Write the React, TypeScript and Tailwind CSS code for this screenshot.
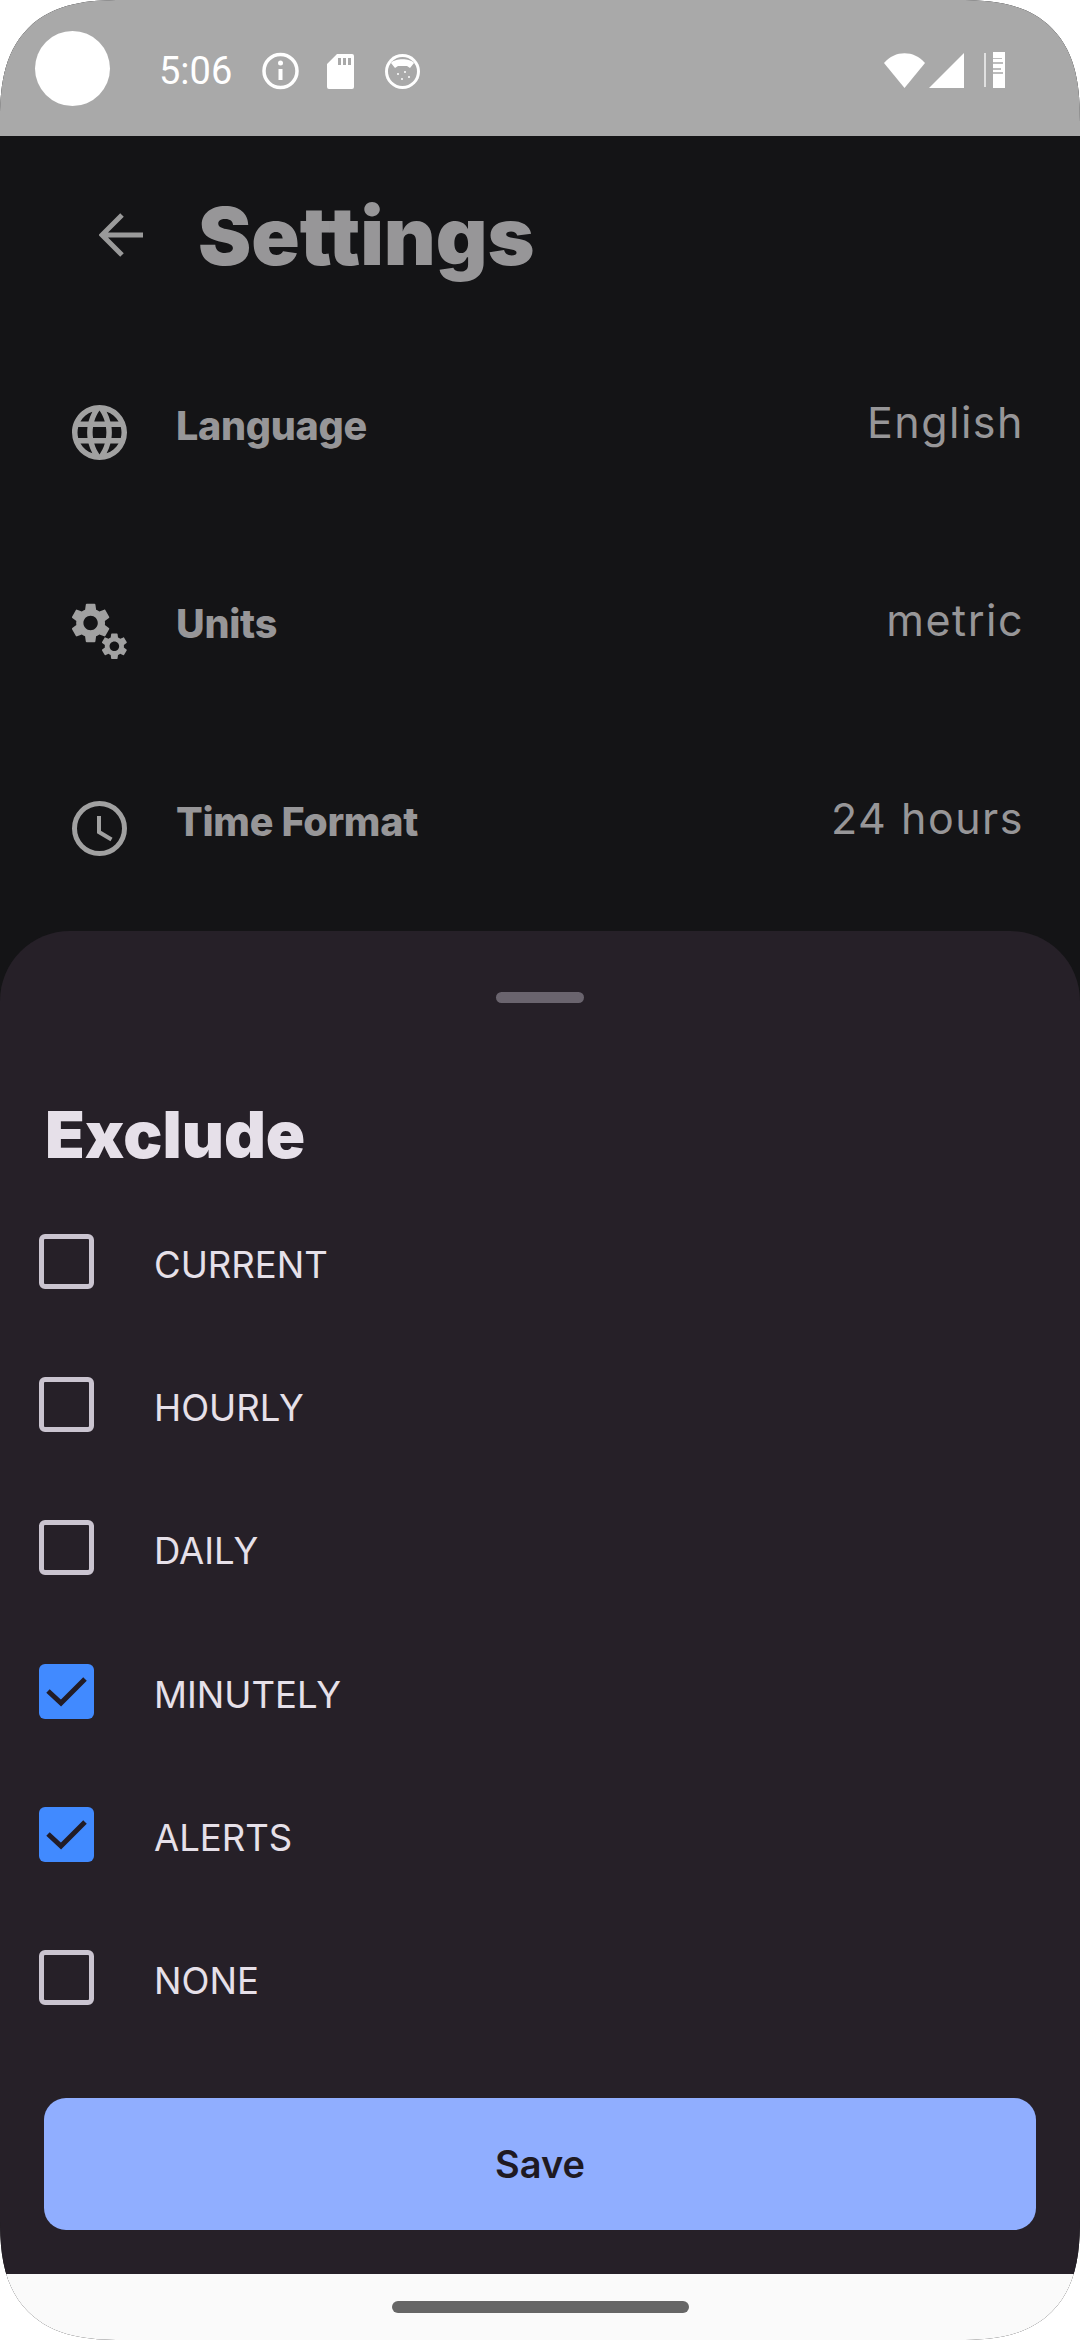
const gear = "M19.14 12.94c.04-.3.06-.61.06-.94 0-.32-.02-.64-.07-.94l2.03-1.58c.18-.14.23-.41.12-.61l-1.92-3.32c-.12-.22-.37-.29-.59-.22l-2.39.96c-.5-.38-1.03-.7-1.62-.94l-.36-2.54c-.04-.24-.24-.41-.48-.41h-3.84c-.24 0-.43.17-.47.41l-.36 2.54c-.59.24-1.13.57-1.62.94l-2.39-.96c-.22-.08-.47 0-.59.22L2.74 8.87c-.12.21-.08.47.12.61l2.03 1.58c-.05.3-.09.63-.09.94s.02.64.07.94l-2.03 1.58c-.18.14-.23.41-.12.61l1.92 3.32c.12.22.37.29.59.22l2.39-.96c.5.38 1.03.7 1.62.94l.36 2.54c.05.24.24.41.48.41h3.84c.24 0 .44-.17.47-.41l.36-2.54c.59-.24 1.13-.56 1.62-.94l2.39.96c.22.08.47 0 .59-.22l1.92-3.32c.12-.22.07-.47-.12-.61l-2.01-1.58zM12 15.6c-1.98 0-3.6-1.62-3.6-3.6s1.62-3.6 3.6-3.6 3.6 1.62 3.6 3.6-1.62 3.6-3.6 3.6z";
const web = "M16.36,14C16.44,13.34 16.5,12.68 16.5,12C16.5,11.32 16.44,10.66 16.36,10H19.74C19.9,10.64 20,11.31 20,12C20,12.69 19.9,13.36 19.74,14M14.59,19.56C15.19,18.45 15.65,17.25 15.97,16H18.92C17.96,17.65 16.43,18.93 14.59,19.56M14.34,14H9.66C9.56,13.34 9.5,12.68 9.5,12C9.5,11.32 9.56,10.65 9.66,10H14.34C14.43,10.65 14.5,11.32 14.5,12C14.5,12.68 14.43,13.34 14.34,14M12,19.96C11.17,18.76 10.5,17.43 10.09,16H13.91C13.5,17.43 12.83,18.76 12,19.96M8,8H5.08C6.03,6.34 7.57,5.06 9.4,4.44C8.8,5.55 8.35,6.75 8,8M5.08,16H8C8.35,17.25 8.8,18.45 9.4,19.56C7.57,18.93 6.03,17.65 5.08,16M4.26,14C4.1,13.36 4,12.69 4,12C4,11.31 4.1,10.64 4.26,10H7.64C7.56,10.66 7.5,11.32 7.5,12C7.5,12.68 7.56,13.34 7.64,14M12,4.03C12.83,5.23 13.5,6.57 13.91,8H10.09C10.5,6.57 11.17,5.23 12,4.03M18.92,8H15.97C15.65,6.75 15.19,5.55 14.59,4.44C16.43,5.07 17.96,6.34 18.92,8M12,2C6.47,2 2,6.5 2,12A10,10 0 0,0 12,22A10,10 0 0,0 22,12A10,10 0 0,0 12,2Z";

function GlobeIcon() {
  return <svg viewBox="2 2 20 20" className="w-[55px] h-[55px]" fill="#a1a1a1"><path d={web} /></svg>;
}
function CogsIcon() {
  return (
    <svg viewBox="0 0 55 56" className="w-[55px] h-[56px]" fill="#a1a1a1">
      <g transform="translate(-5.4,-4) scale(2)"><path d={gear} /></g>
      <g transform="translate(26.4,27.3) scale(1.33)"><path d={gear} /></g>
    </svg>
  );
}
function ClockIcon() {
  return (
    <svg viewBox="0 0 55 55" className="w-[55px] h-[55px]" fill="none" stroke="#a1a1a1">
      <circle cx="27.5" cy="27.5" r="25" strokeWidth="5" />
      <path d="M27 15V31L39.5 38.5" strokeWidth="4" />
    </svg>
  );
}

function SettingRow({ icon, label, value }: { icon: React.ReactNode; label: string; value: string }) {
  return (
    <div className="flex h-[198px] items-start pl-[72px] pr-[56px]">
      <div className="w-[104px] shrink-0 pt-[6px]">{icon}</div>
      <div className="font-['Inter'] font-extrabold text-[39.5px] leading-[54px] text-[#979698] tracking-[-0.3px]">{label}</div>
      <div className="ml-auto font-['Inter'] text-[43px] leading-[46px] text-[#979698] tracking-[1.5px]">{value}</div>
    </div>
  );
}

function CheckRow({ label, checked }: { label: string; checked?: boolean }) {
  return (
    <div className="flex h-[143.2px] items-start pl-[39px]">
      {checked ? (
        <div className="w-[55px] h-[55px] rounded-[6px] bg-[#418aff] flex items-center justify-center">
          <svg viewBox="0 0 55 55" className="w-[55px] h-[55px]" fill="none" stroke="#221c26" strokeWidth="5"><path d="M9 27L22 39L46 15" /></svg>
        </div>
      ) : (
        <div className="w-[55px] h-[55px] rounded-[6px] border-[5px] border-[#cac4d0]" />
      )}
      <div className="ml-[60px] mt-[8px] font-['Inter'] font-normal text-[36.5px] leading-[47px] text-[#e6e0e9] whitespace-nowrap">{label}</div>
    </div>
  );
}

export default function App() {
  return (
    <div className="w-[1080px] h-[2340px] bg-white">
      <div className="w-[1080px] h-[2340px] flex flex-col overflow-hidden bg-[#141416] rounded-[122px] [corner-shape:superellipse(1.4)]">
        <div className="h-[136px] shrink-0 bg-[#a9a9a9] flex items-center pl-[35px] pr-[75px]">
          <div className="w-[75px] h-[75px] rounded-full bg-white" />
          <div className="ml-[49px] mt-[5px] font-['Roboto'] font-normal text-[38px] leading-[44px] text-white">5:06</div>
          <svg viewBox="0 0 37 38" className="ml-[30px] w-[37px] h-[38px] mt-[6px]" fill="none" stroke="white">
            <circle cx="18.5" cy="19" r="16.5" strokeWidth="3.5" />
            <path d="M18.5 17V28" strokeWidth="4" />
            <circle cx="18.5" cy="11" r="2.5" fill="white" stroke="none" />
          </svg>
          <svg viewBox="0 0 27 35" className="ml-[28px] w-[27px] h-[35px] mt-[6px]" fill="white">
            <path fillRule="evenodd" d="M10 0H25A2 2 0 0 1 27 2V33A2 2 0 0 1 25 35H2A2 2 0 0 1 0 33V10ZM11 4V11H14V4ZM16 4V11H19V4ZM21 4V11H24V4Z" />
          </svg>
          <svg viewBox="0 0 35 35" className="ml-[31px] w-[35px] h-[35px] mt-[6px]">
            <circle cx="17.5" cy="17.5" r="17.5" fill="white" />
            <circle cx="17.5" cy="17.5" r="14.5" fill="#a9a9a9" />
            <path d="M6 9C10 4 25 4 29 9L25 14L22 12H13L10 14Z" fill="white" />
            <circle cx="13" cy="20" r="1" fill="white" /><circle cx="20" cy="18" r="1" fill="white" /><circle cx="17" cy="25" r="1" fill="white" /><circle cx="24" cy="23" r="1" fill="white" />
          </svg>
          <div className="ml-auto flex items-center mt-[4px]">
            <svg viewBox="0 0 41 35" className="w-[41px] h-[35px]" fill="white"><path d="M0 10C11 -3 30 -3 41 10L20.5 35Z" /></svg>
            <svg viewBox="0 0 35 35" className="ml-[4px] w-[35px] h-[35px]" fill="white"><path d="M35 0V35H0Z" /></svg>
            <div className="ml-[20px] w-[2px] h-[34px] bg-[#e0e0e0]" />
            <svg viewBox="0 0 12 36" className="ml-[7px] w-[12px] h-[36px]" fill="white">
              <path d="M0 0H12V36H0Z" fill="white" />
              <path d="M0 6H9V7H0ZM0 10H10V12H0ZM0 16H8V18H0ZM0 20H10V22H0Z" fill="#bdbdbd" />
            </svg>
          </div>
        </div>

        <div className="h-[795px] shrink-0 overflow-hidden">
          <div className="h-[263px] flex items-start pt-[56px]">
            <svg viewBox="0 0 44 44" className="ml-[99px] mt-[21px] w-[44px] h-[44px]" fill="none" stroke="#9a9a9a" strokeWidth="5"><path d="M44 22H4M23 2L3 22L23 42" /></svg>
            <div className="ml-[55px] font-['Inter'] font-black text-[80px] leading-[88px] text-[#979698]">Settings</div>
          </div>
          <SettingRow icon={<GlobeIcon />} label="Language" value="English" />
          <SettingRow icon={<CogsIcon />} label="Units" value="metric" />
          <SettingRow icon={<ClockIcon />} label="Time Format" value="24 hours" />
        </div>

        <div className="h-[1343px] shrink-0 bg-[#262028] rounded-t-[70px] flex flex-col">
          <div className="mt-[61px] self-center w-[88px] h-[11px] rounded-full bg-[#6a646e]" />
          <div className="ml-[45px] mt-[95px] font-['Inter'] font-black text-[65px] leading-[73px] text-[#e6e0e9]">Exclude</div>
          <div className="mt-[63px]">
            <CheckRow label="CURRENT" />
            <CheckRow label="HOURLY" />
            <CheckRow label="DAILY" />
            <CheckRow label="MINUTELY" checked />
            <CheckRow label="ALERTS" checked />
            <CheckRow label="NONE" />
          </div>
          <div className="mx-[44px] mt-[5px] h-[132px] rounded-[22px] bg-[#90aeff] flex items-center justify-center font-['Inter'] font-semibold text-[38px] text-[#1f1a22]">Save</div>
        </div>

        <div className="h-[66px] shrink-0 bg-[#fafafa] flex justify-center pt-[27px]">
          <div className="w-[297px] h-[12px] rounded-full bg-[#666666]" />
        </div>
      </div>
    </div>
  );
}
